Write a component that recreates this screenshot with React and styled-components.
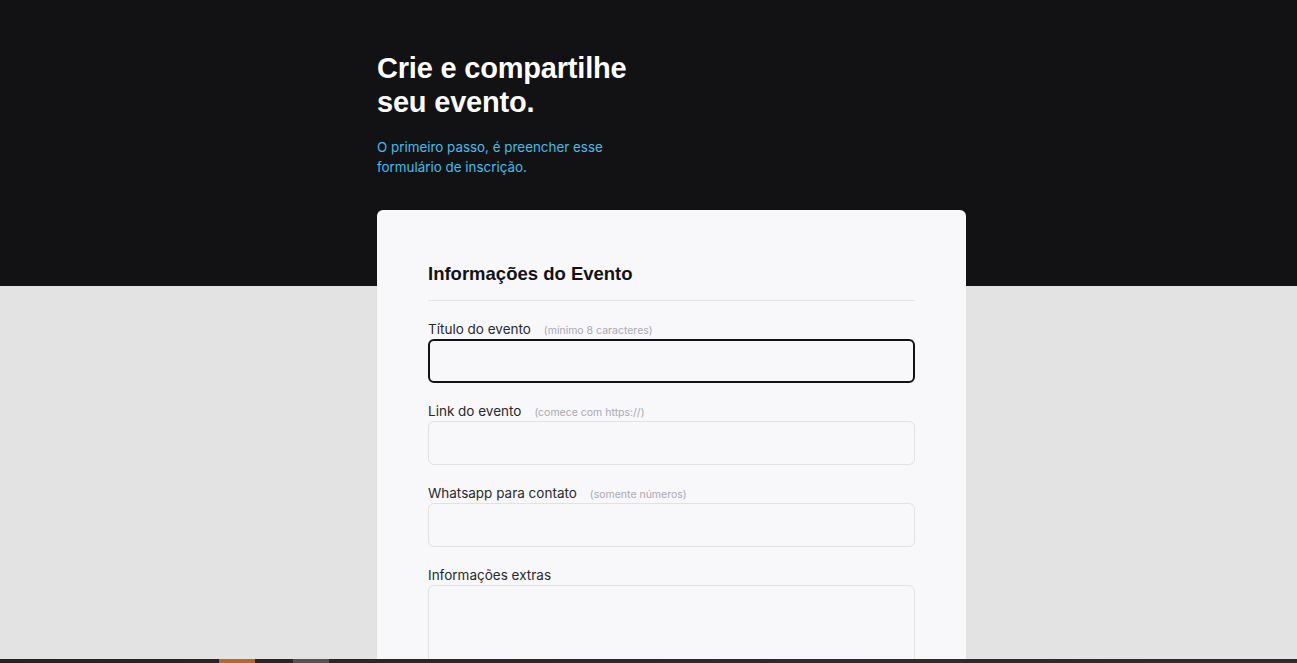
import React from "react";
import styled, { createGlobalStyle } from "styled-components";

const Global = createGlobalStyle`
  html, body { margin: 0; padding: 0; }
  body {
    background: #e3e3e4;
    font-family: Inter, "Open Sans", sans-serif;
    overflow: hidden;
  }
  * { box-sizing: border-box; }
`;

const Page = styled.div`
  min-height: 663px;
  background: linear-gradient(#121214 0, #121214 286px, #e3e3e4 286px);
  padding: 51px 0 0 377px;
`;

const Column = styled.main`
  width: 589px;
`;

const Title = styled.h1`
  margin: 0;
  width: 270px;
  font-family: "Liberation Sans", Arial, sans-serif;
  font-weight: 700;
  font-size: 29px;
  line-height: 34px;
  color: #ffffff;
  letter-spacing: -0.2px;
`;

const Subtitle = styled.p`
  margin: 18px 0 0;
  width: 240px;
  font-family: Inter, sans-serif;
  font-size: 13.4px;
  line-height: 20px;
  color: #3fbfef;
`;

const Card = styled.form`
  margin-top: 33px;
  background: #f8f8fa;
  border-radius: 6px;
  padding: 52px 51px 40px;
  min-height: 500px;
`;

const Heading = styled.h2`
  margin: 0;
  padding-bottom: 14px;
  border-bottom: 1px solid #e1e1e6;
  font-family: "Liberation Sans", Arial, sans-serif;
  font-weight: 700;
  font-size: 18.5px;
  line-height: 24px;
  color: #121214;
`;

const Fields = styled.div`
  display: flex;
  flex-direction: column;
  gap: 20px;
  margin-top: 20px;
`;

const Field = styled.label`
  display: flex;
  flex-direction: column;
`;

const LabelRow = styled.span`
  display: flex;
  align-items: baseline;
  gap: 13px;
  font-family: Inter, sans-serif;
  font-size: 13.5px;
  line-height: 17px;
  color: #29292e;
`;

const Hint = styled.span`
  font-size: 10.5px;
  color: #aaa6b3;
`;

const Input = styled.input`
  height: 44px;
  width: 100%;
  border-radius: 6px;
  background: #f8f8fa;
  border: ${(p) => (p.$focused ? "2px solid #121214" : "1px solid #e1e1e6")};
  outline: none;
  padding: 0 12px;
  font-family: Inter, sans-serif;
  font-size: 14px;
`;

const TextArea = styled.textarea`
  margin-top: 1px;
  height: 120px;
  width: 100%;
  border-radius: 6px;
  background: #f8f8fa;
  border: 1px solid #e1e1e6;
  outline: none;
  resize: none;
`;

const Taskbar = styled.div`
  position: fixed;
  left: 0;
  right: 0;
  bottom: 0;
  height: 4px;
  background: linear-gradient(90deg, #232323, #2e2c28 60%, #302c26);
`;

const TaskItem = styled.span`
  position: absolute;
  top: 0;
  height: 4px;
  width: 36px;
  left: ${(p) => p.$left}px;
  background: ${(p) => p.$color};
`;

export default function App() {
  return (
    <>
      <Global />
      <Page>
        <Column>
          <Title>Crie e compartilhe seu evento.</Title>
          <Subtitle>O primeiro passo, é preencher esse formulário de inscrição.</Subtitle>
          <Card onSubmit={(e) => e.preventDefault()}>
            <Heading>Informações do Evento</Heading>
            <Fields>
              <Field>
                <LabelRow>
                  Título do evento <Hint>(mínimo 8 caracteres)</Hint>
                </LabelRow>
                <Input $focused />
              </Field>
              <Field>
                <LabelRow>
                  Link do evento <Hint>(comece com https://)</Hint>
                </LabelRow>
                <Input />
              </Field>
              <Field>
                <LabelRow>
                  Whatsapp para contato <Hint>(somente números)</Hint>
                </LabelRow>
                <Input />
              </Field>
              <Field>
                <LabelRow>Informações extras</LabelRow>
                <TextArea />
              </Field>
            </Fields>
          </Card>
        </Column>
      </Page>
      <Taskbar>
        <TaskItem $left={219} $color="#b2692c" />
        <TaskItem $left={293} $color="#55534f" />
      </Taskbar>
    </>
  );
}
